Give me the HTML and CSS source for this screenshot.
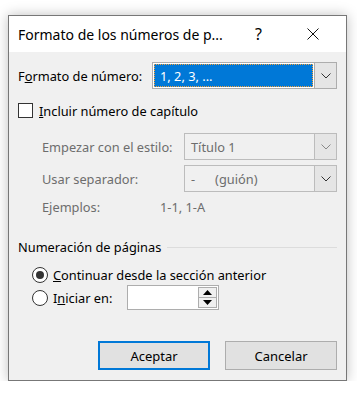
FILE: index.html
```html
<!DOCTYPE html>
<html>
<head>
    <title>Formato de los números de página</title>
    <link rel="stylesheet" href="styles.css">
</head>
<body>
    <div class="dialog">
        <div class="titlebar">
            <span class="title">Formato de los números de p...</span>
            <span class="help">?</span>
            <span class="close">
                <svg width="12" height="12" viewBox="0 0 12 12"><path d="M0.5 0.5 L11.5 11.5 M11.5 0.5 L0.5 11.5" stroke="#111" stroke-width="1"/></svg>
            </span>
        </div>
        <div class="body">
            <div class="row format-row">
                <span class="label">F<u>o</u>rmato de número:</span>
                <div class="select active">
                    <div class="value"><span class="sel-text">1, 2, 3, ...</span></div>
                    <div class="drop"><svg width="10" height="6" viewBox="0 0 10 6"><path d="M0.5 0.5 L5 5 L9.5 0.5" fill="none" stroke="#333"/></svg></div>
                </div>
            </div>
            <div class="row check-row">
                <span class="checkbox"></span>
                <span><u>I</u>ncluir número de capítulo</span>
            </div>
            <div class="row sub-row first">
                <span class="label sub">Empezar con el estilo:</span>
                <div class="select disabled">
                    <div class="value">Título 1</div>
                    <div class="drop"><svg width="10" height="6" viewBox="0 0 10 6"><path d="M0.5 0.5 L5 5 L9.5 0.5" fill="none" stroke="#888"/></svg></div>
                </div>
            </div>
            <div class="row sub-row">
                <span class="label sub">Usar separador:</span>
                <div class="select disabled">
                    <div class="value">-&nbsp;&nbsp;&nbsp;&nbsp;&nbsp;&nbsp;(guión)</div>
                    <div class="drop"><svg width="10" height="6" viewBox="0 0 10 6"><path d="M0.5 0.5 L5 5 L9.5 0.5" fill="none" stroke="#333"/></svg></div>
                </div>
            </div>
            <div class="row example-row">
                <span class="label sub">Ejemplos:</span>
                <span class="example">1-1, 1-A</span>
            </div>
            <div class="group">
                <span>Numeración de páginas</span>
                <span class="line"></span>
            </div>
            <div class="row radio-row">
                <span class="radio checked"></span>
                <span><u>C</u>ontinuar desde la sección anterior</span>
            </div>
            <div class="row radio-row second">
                <span class="radio"></span>
                <span class="start-label">I<u>n</u>iciar en:</span>
                <div class="spin">
                    <div class="spin-field"></div>
                    <div class="spin-btns">
                        <div class="spin-btn"><svg width="9" height="5" viewBox="0 0 9 5"><path d="M0 5 L4.5 0 L9 5 Z" fill="#000"/></svg></div>
                        <div class="spin-btn"><svg width="9" height="5" viewBox="0 0 9 5"><path d="M0 0 L4.5 5 L9 0 Z" fill="#000"/></svg></div>
                    </div>
                </div>
            </div>
            <div class="buttons">
                <button class="btn default">Aceptar</button>
                <button class="btn">Cancelar</button>
            </div>
        </div>
    </div>
</body>
</html>
```

FILE: styles.css
```css
body {
    margin: 0; background: #fff;
    font-family: "Noto Sans", "Open Sans", sans-serif;
    font-size: 12.8px; color: #000;
}
.dialog {
    margin: 15px 0 0 8px; width: 337px; height: 364px;
    border: 1px solid #777; background: #f0f0f0;
    box-shadow: 0 0 12px rgba(0,0,0,0.25);
    display: flex; flex-direction: column;
}
.titlebar {
    height: 36px; background: #fff;
    display: flex; align-items: center;
    padding-left: 9px; font-size: 14px;
}
.title { width: 237px; }
.help { width: 52px; font-size: 16px; }
.close { display: flex; align-items: center; }
.body { flex: 1; padding: 10px 9px 10px 9px; display: flex; flex-direction: column; }
.row { display: flex; align-items: center; }
.format-row { height: 27px; }
.label { width: 134px; }
.label.sub { width: 142px; color: #6d6d6d; padding-left: 24px; box-sizing: border-box; }
.sub-row .label.sub { width: 166px; }
.select {
    height: 27px; box-sizing: border-box; border: 1px solid #adadad;
    display: flex; flex: 1; background: #fff;
}
.select .value { flex: 1; display: flex; align-items: center; padding: 1px; }
.select.active .sel-text {
    display: flex; align-items: center; height: 100%; width: 100%;
    background: #0078d7; color: #fff; padding-left: 6px;
    outline: 1px dotted #f4a13a; outline-offset: -1px;
}
.select .drop {
    width: 21px; background: #e5e5e5; border-left: 1px solid #adadad;
    display: flex; align-items: center; justify-content: center;
}
.select.disabled { background: #f0f0f0; border-color: #bcbcbc; color: #6d6d6d; }
.select.disabled .value { padding-left: 6px; }
.select.disabled .drop { border-left-color: #bcbcbc; }
.check-row { margin-top: 14px; height: 15px; }
.checkbox {
    width: 13px; height: 13px; border: 1px solid #333; background: #fff;
    margin-right: 6px;
}
.sub-row { height: 27px; margin-top: 5px; }
.sub-row.first { margin-top: 15px; }
.example-row { height: 16px; margin-top: 7px; }
.example { color: #6d6d6d; }
.group { display: flex; align-items: center; margin-top: 23px; height: 18px; }
.group .line { flex: 1; height: 1px; background: #dcdcdc; margin-left: 6px; }
.radio-row { margin-top: 10px; height: 18px; padding-left: 14px; }
.radio-row.second { margin-top: 0; height: 27px; }
.radio {
    width: 14px; height: 14px; border: 1px solid #333; border-radius: 50%;
    background: #fff; margin-right: 5px; display: flex;
    align-items: center; justify-content: center;
}
.radio.checked::after {
    content: ""; width: 8px; height: 8px; border-radius: 50%; background: #333;
}
.start-label { width: 74px; }
.spin {
    width: 92px; height: 25px; box-sizing: border-box; border: 1px solid #adadad;
    background: #fff; display: flex;
}
.spin-field { flex: 1; }
.spin-btns { width: 19px; display: flex; flex-direction: column; padding: 1px 1px 1px 0; }
.spin-btn {
    flex: 1; background: #f0f0f0; border: 1px solid #adadad; margin-top: -1px;
    display: flex; align-items: center; justify-content: center;
}
.spin-btn:first-child { margin-top: 0; }
.buttons { margin-top: auto; display: flex; justify-content: flex-end; gap: 15px; }
.btn {
    width: 112px; height: 29px; background: #e1e1e1; border: 1px solid #adadad;
    font-family: inherit; font-size: 13px; color: #000; padding: 0;
}
.btn.default { border: 2px solid #0078d7; }
```
